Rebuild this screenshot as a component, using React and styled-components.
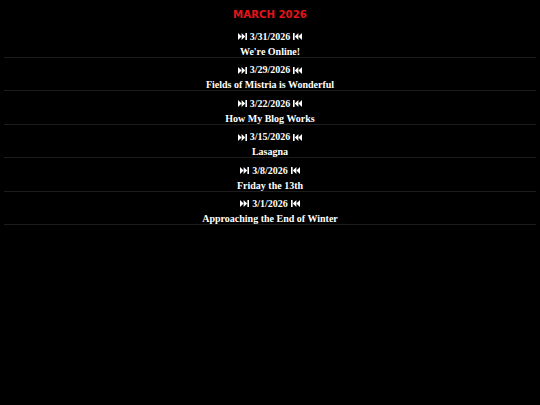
import React from "react";
import styled, { createGlobalStyle } from "styled-components";

const posts = [
  { date: "3/31/2026", title: "We're Online!" },
  { date: "3/29/2026", title: "Fields of Mistria is Wonderful" },
  { date: "3/22/2026", title: "How My Blog Works" },
  { date: "3/15/2026", title: "Lasagna" },
  { date: "3/8/2026", title: "Friday the 13th" },
  { date: "3/1/2026", title: "Approaching the End of Winter" },
];

const Global = createGlobalStyle`
  html, body {
    margin: 0;
    background: #000;
    color: #fff;
  }
`;

const Page = styled.div`
  min-height: 405px;
  padding: 8px 4px 0;
  box-sizing: border-box;
  background: #000;
`;

const Month = styled.h2`
  margin: 0 0 2.6px;
  font-family: "DejaVu Sans", sans-serif;
  font-size: 10.2px;
  line-height: 14px;
  font-weight: bold;
  text-align: center;
  color: #e3141a;
`;

const Post = styled.div`
  padding-top: 3.4px;
  border-bottom: 1px solid #1c1c1c;
  text-align: center;
  font-family: "Liberation Serif", "DejaVu Serif", serif;
  font-weight: bold;
  font-size: 10px;
`;

const DateLine = styled.div`
  line-height: 18px;
  display: flex;
  justify-content: center;
  align-items: center;
  gap: 3px;
`;

const Skip = styled.svg`
  width: 9px;
  height: 7px;
  fill: #fff;
  transform: ${(p) => (p.$back ? "scaleX(-1)" : "none")};
`;

const SkipIcon = ({ back }) => (
  <Skip $back={back} viewBox="0 0 9 7">
    <polygon points="0,0 3.6,3.5 0,7" />
    <polygon points="3.6,0 7.2,3.5 3.6,7" />
    <rect x="7.4" y="0" width="1.6" height="7" />
  </Skip>
);

const Title = styled.div`
  line-height: 11px;
`;

export default function App() {
  return (
    <Page>
      <Global />
      <Month>MARCH 2026</Month>
      {posts.map((p) => (
        <Post key={p.date}>
          <DateLine>
            <SkipIcon />
            <span>{p.date}</span>
            <SkipIcon back />
          </DateLine>
          <Title>{p.title}</Title>
        </Post>
      ))}
    </Page>
  );
}
